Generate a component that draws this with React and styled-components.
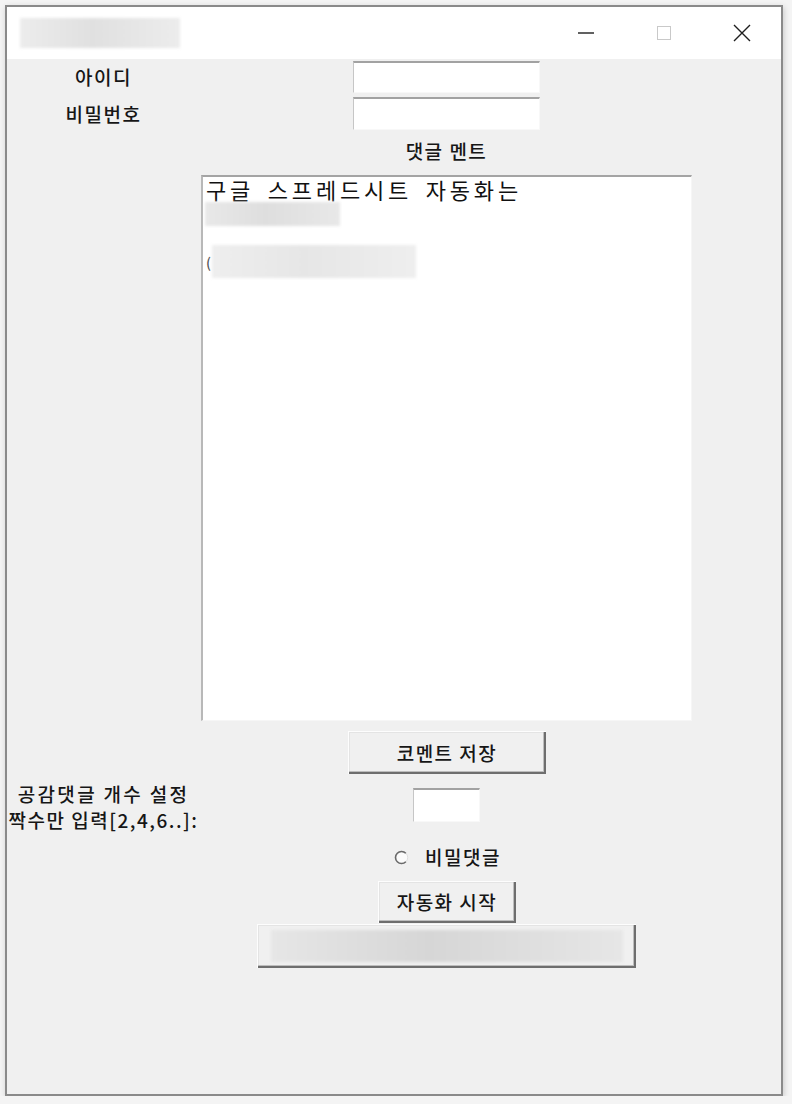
import React from 'react';
import styled, { createGlobalStyle } from 'styled-components';

const Global = createGlobalStyle`
  html, body {
    margin: 0;
    padding: 0;
    background: #f4f4f4;
  }
  body {
    font-family: "Noto Sans CJK KR", "Noto Sans", sans-serif;
    font-weight: 500;
    color: #161616;
  }
`;

const Window = styled.div`
  box-sizing: border-box;
  width: 778px;
  height: 1091px;
  margin: 5px 0 0 5px;
  border: 2px solid #8a8a8a;
  background: #f0f0f0;
  box-shadow: 1px 2px 6px rgba(0, 0, 0, 0.18);
  display: flex;
  flex-direction: column;
`;

const TitleBar = styled.div`
  height: 52px;
  background: #fff;
  display: flex;
  align-items: center;
  padding-left: 13px;
`;

const Controls = styled.div`
  margin-left: auto;
  display: flex;
  height: 100%;
`;

const ControlBtn = styled.div`
  width: 78px;
  height: 100%;
  display: flex;
  align-items: center;
  justify-content: center;
`;

const Redact = styled.div`
  flex: none;
  width: ${p => p.$w}px;
  height: ${p => p.$h}px;
  margin-left: ${p => p.$ml || 0}px;
  margin-top: ${p => p.$mt || 0}px;
  background: linear-gradient(90deg, ${p => p.$edge || '#e6e6e6'}, ${p => p.$mid || '#dcdcdc'} 45%, ${p => p.$edge || '#e6e6e6'});
  filter: blur(1.5px);
`;

const Body = styled.div`
  display: flex;
  flex-direction: column;
`;

const Row = styled.div`
  display: grid;
  grid-template-columns: 193px 493px;
  align-items: center;
  margin-top: ${p => p.$mt}px;
`;

const Label = styled.div`
  grid-column: 1;
  justify-self: center;
  text-align: center;
  font-size: 19px;
  line-height: 26px;
  letter-spacing: ${p => p.$ls || 1.5}px;
  white-space: nowrap;
`;

const Caption = styled(Label)`
  grid-column: 2;
`;

const Field = styled.input`
  grid-column: 2;
  justify-self: center;
  align-self: ${p => p.$self || 'center'};
  box-sizing: border-box;
  width: ${p => p.$w}px;
  height: ${p => p.$h}px;
  margin: ${p => p.$mt || 0}px 0 0;
  padding: 0 4px;
  background: #fff;
  border: none;
  border-top: 2px solid #a2a2a2;
  border-left: 1px solid #c6c6c6;
  border-right: 1px solid #f8f8f8;
  border-bottom: 1px solid #f8f8f8;
  outline: none;
  font: inherit;
`;

const TextBox = styled.div`
  grid-column: 2;
  justify-self: center;
  box-sizing: border-box;
  width: 491px;
  height: 546px;
  background: #fff;
  border-top: 2px solid #a4a4a4;
  border-left: 2px solid #b8b8b8;
  border-right: 1px solid #f6f6f6;
  border-bottom: 1px solid #f6f6f6;
  padding: 0 0 0 3px;
`;

const TextLine = styled.div`
  font-size: 22px;
  font-weight: 400;
  line-height: 25px;
  letter-spacing: 3.8px;
  word-spacing: 5px;
  white-space: nowrap;
  color: #111;
`;

const BlurLine = styled.div`
  display: flex;
  align-items: center;
  margin-top: ${p => p.$mt || 0}px;
`;

const Glyph = styled.span`
  font-size: 14px;
  color: #555;
  width: 6px;
`;

const Button = styled.div`
  grid-column: 2;
  justify-self: center;
  box-sizing: border-box;
  width: ${p => p.$w}px;
  height: ${p => p.$h}px;
  background: #f0f0f0;
  border-top: 1px solid #fdfdfd;
  border-left: 1px solid #fdfdfd;
  box-shadow: inset -2px -2px 0 #6e6e6e, inset -3px -3px 0 #bdbdbd, inset 1px 1px 0 #e4e4e4;
  display: flex;
  align-items: center;
  justify-content: center;
  font-size: 19px;
  letter-spacing: 1.5px;
  padding-bottom: 2px;
`;

const Radio = styled.div`
  grid-column: 2;
  justify-self: center;
  display: flex;
  align-items: center;
  gap: 16px;
  font-size: 19px;
  line-height: 26px;
  letter-spacing: 1.5px;
  padding-left: 2px;
`;

const MinIcon = () => (
  <svg width="22" height="4" viewBox="0 0 22 4">
    <line x1="3" y1="2" x2="19" y2="2" stroke="#1e1e1e" strokeWidth="1.4" />
  </svg>
);

const MaxIcon = () => (
  <svg width="16" height="16" viewBox="0 0 16 16">
    <rect x="1.5" y="1.5" width="13" height="13" fill="none" stroke="#c9c9c9" strokeWidth="1" />
  </svg>
);

const CloseIcon = () => (
  <svg width="18" height="18" viewBox="0 0 18 18">
    <path d="M1 1 L17 17 M17 1 L1 17" stroke="#1e1e1e" strokeWidth="1.4" fill="none" />
  </svg>
);

const RadioIcon = () => (
  <svg width="15" height="15" viewBox="0 0 15 15">
    <circle cx="7.5" cy="7.5" r="6.2" fill="#fbfbfb" stroke="#dedede" strokeWidth="1" />
    <path d="M11.8 3.3 A6 6 0 1 0 11.8 11.7" fill="none" stroke="#6a6a6a" strokeWidth="1.6" />
  </svg>
);

export default function App() {
  return (
    <>
      <Global />
      <Window>
        <TitleBar>
          <Redact $w={160} $h={30} $edge="#ececec" $mid="#e0e0e0" />
          <Controls>
            <ControlBtn><MinIcon /></ControlBtn>
            <ControlBtn><MaxIcon /></ControlBtn>
            <ControlBtn><CloseIcon /></ControlBtn>
          </Controls>
        </TitleBar>
        <Body>
          <Row $mt={2}>
            <Label>아이디</Label>
            <Field $w={187} $h={32} />
          </Row>
          <Row $mt={4}>
            <Label>비밀번호</Label>
            <Field $w={187} $h={33} />
          </Row>
          <Row $mt={8}>
            <Caption>댓글 멘트</Caption>
          </Row>
          <Row $mt={11}>
            <TextBox>
              <TextLine>구글 스프레드시트 자동화는</TextLine>
              <Redact $w={135} $h={24} $ml={-1} $edge="#e8e8e8" $mid="#dedede" />
              <BlurLine $mt={19}>
                <Glyph>(</Glyph>
                <Redact $w={204} $h={33} $edge="#eeeeee" $mid="#e6e6e6" />
              </BlurLine>
            </TextBox>
          </Row>
          <Row $mt={10}>
            <Button $w={198} $h={43}>코멘트 저장</Button>
          </Row>
          <Row $mt={7}>
            <Label $ls={2.3}>
              공감댓글 개수 설정
              <br />
              <span style={{ letterSpacing: 1.5 }}>짝수만 입력[2,4,6..]:</span>
            </Label>
            <Field $w={67} $h={34} $self="start" $mt={7} />
          </Row>
          <Row $mt={11}>
            <Radio>
              <RadioIcon />
              <span>비밀댓글</span>
            </Radio>
          </Row>
          <Row $mt={11}>
            <Button $w={138} $h={42}>자동화 시작</Button>
          </Row>
          <Row $mt={1}>
            <Button $w={379} $h={44}>
              <Redact $w={352} $h={32} $edge="#e6e6e6" $mid="#d6d6d6" />
            </Button>
          </Row>
        </Body>
      </Window>
    </>
  );
}
